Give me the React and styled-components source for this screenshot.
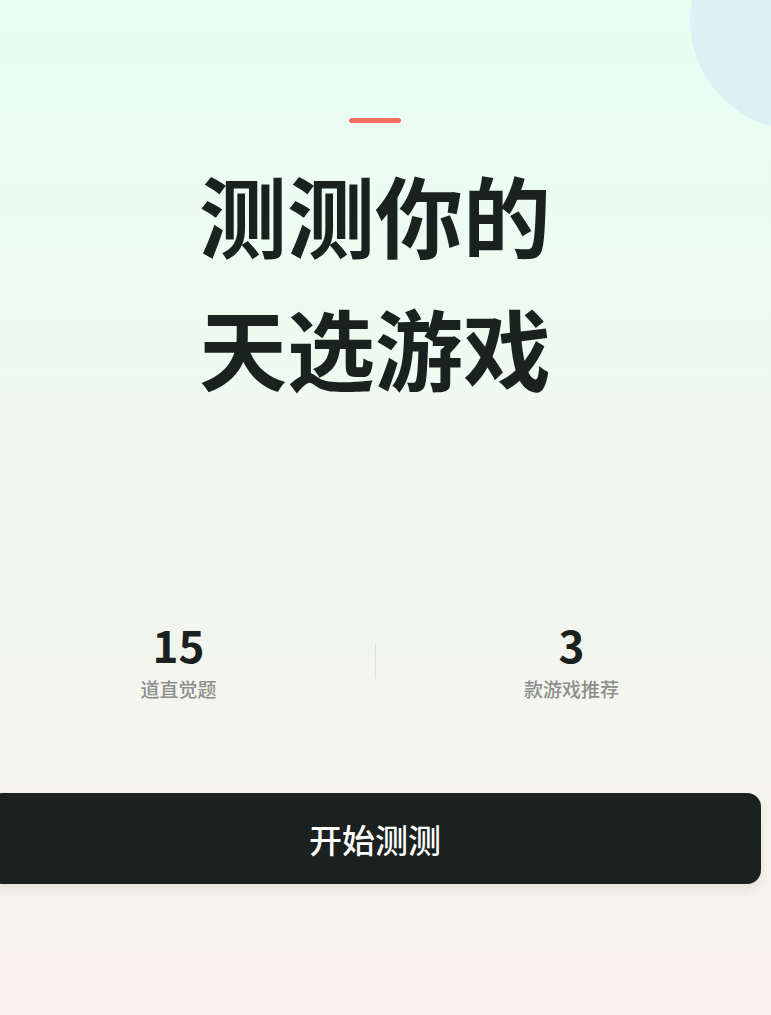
import styled, {createGlobalStyle} from 'styled-components';

const GlobalStyle = createGlobalStyle`
  html, body {
    margin: 0;
    padding: 0;
  }
  body {
    font-family: "Noto Sans CJK SC", "Noto Sans", sans-serif;
    background: #f8f2ec;
  }
`;

const stats = [
  {value: '15', label: '道直觉题'},
  {value: '3', label: '款游戏推荐'}
];

function App() {
  return (
    <>
      <GlobalStyle />
      <Screen>
        <Bubble />
        <Column>
          <Accent />
          <Title>
            测测你的
            <br />
            天选游戏
          </Title>
          <StatsRow>
            <Stat>
              <StatValue>{stats[0].value}</StatValue>
              <StatLabel>{stats[0].label}</StatLabel>
            </Stat>
            <Divider />
            <Stat>
              <StatValue>{stats[1].value}</StatValue>
              <StatLabel>{stats[1].label}</StatLabel>
            </Stat>
          </StatsRow>
          <StartButton type="button">开始测测</StartButton>
        </Column>
      </Screen>
    </>
  );
}

const Screen = styled.div`
  position: relative;
  overflow: hidden;
  width: 771px;
  min-height: 1015px;
  background: linear-gradient(180deg, #eafdf3 0%, #eefbf1 30%, #f2f6ef 60%, #f5f4ed 82%, #f8f2ec 100%);
`;

const Bubble = styled.div`
  position: absolute;
  top: -90px;
  left: 690px;
  width: 220px;
  height: 220px;
  border-radius: 50%;
  background: #dcf1f3;
`;

const Column = styled.main`
  position: relative;
  width: 750px;
  display: flex;
  flex-direction: column;
  align-items: center;
  padding-top: 118px;
`;

const Accent = styled.div`
  width: 52px;
  height: 5px;
  border-radius: 3px;
  background: #f4705e;
`;

const Title = styled.h1`
  margin: 23px 0 0;
  font-size: 88px;
  font-weight: 700;
  line-height: 133px;
  letter-spacing: 0;
  text-align: center;
  color: #19221f;
`;

const StatsRow = styled.div`
  margin-top: 206px;
  display: flex;
  align-items: center;
  justify-content: center;
  gap: 96px;
`;

const Stat = styled.div`
  width: 200px;
  display: flex;
  flex-direction: column;
  align-items: center;
`;

const StatValue = styled.div`
  font-size: 44px;
  font-weight: 700;
  line-height: 53px;
  color: #1b211f;
`;

const StatLabel = styled.div`
  margin-top: 6px;
  font-size: 19px;
  font-weight: 500;
  line-height: 24px;
  color: #8b8e8c;
`;

const Divider = styled.div`
  width: 1px;
  height: 36px;
  margin-top: 2px;
  background: #dcdfdc;
`;

const StartButton = styled.button`
  flex-shrink: 0;
  margin-top: 92px;
  width: 772px;
  height: 91px;
  border: none;
  border-radius: 14px;
  background: #1a211e;
  color: #ffffff;
  font-family: inherit;
  font-size: 33px;
  font-weight: 500;
  letter-spacing: 0;
  box-shadow: 0 6px 12px rgba(0, 0, 0, 0.08);
  cursor: pointer;
`;

export default App;
